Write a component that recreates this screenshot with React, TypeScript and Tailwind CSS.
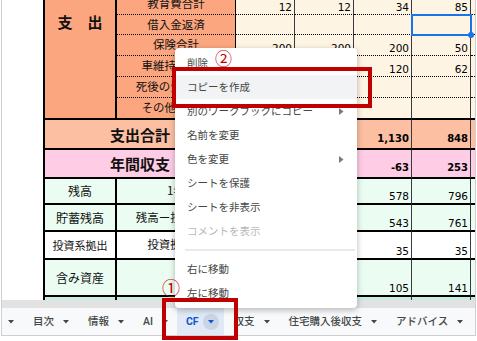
import React from "react";

const cols = "grid grid-cols-[74px_119px_59px_59px_58px_59px_4px]";
const jp = "font-['Noto_Sans_CJK_JP',sans-serif]";
const num = "font-['DejaVu_Sans',sans-serif]";

const topRows = [
  { label: "教育費合計", vals: ["12", "12", "34", "85"] },
  { label: "借入金返済", vals: ["", "", "", ""] },
  { label: "保険合計", vals: ["200", "200", "200", "50"] },
  { label: "車維持費合計", vals: ["120", "120", "120", "62"] },
  { label: "死後の費用合計", vals: ["", "", "", ""] },
  { label: "その他の合計", vals: ["", "", "", ""] },
];

const Caret = ({ className = "", color = "#444746" }: { className?: string; color?: string }) => (
  <svg width="6" height="4" viewBox="0 0 6 4" className={className}>
    <polygon points="0,0 6,0 3,3.5" fill={color} />
  </svg>
);

const SubArrow = () => (
  <svg width="5" height="7" viewBox="0 0 5 7" className="ml-auto mr-[13px]">
    <polygon points="0,0 4.5,3.5 0,7" fill="#7a7a7a" />
  </svg>
);

const DataCell = ({ v, bg, last, bold }: { v: string; bg: string; last?: boolean; bold?: boolean }) => (
  <div
    className={`${bg} ${num} flex items-end justify-end pr-[2px] ${bold ? "pb-[4px] font-bold text-[10px]" : "pb-[2px] text-[10.5px]"} leading-none text-black border-r border-r-[#3a3a3a] ${
      last ? "border-b-2 border-b-black" : "border-b border-b-black [border-bottom-style:dotted]"
    }`}
  >
    {v}
  </div>
);

type SumRow = {
  h: string;
  bg: string;
  merged?: string;
  c1?: string;
  c1size?: string;
  c2?: string;
  vals: string[];
  bold?: boolean;
};

const sumRows: SumRow[] = [
  { h: "h-[30px]", bg: "bg-[#fcbfa2]", merged: "支出合計", vals: ["1,050", "1,080", "1,130", "848"], bold: true },
  { h: "h-[29px]", bg: "bg-[#ffcce5]", merged: "年間収支", vals: ["12", "-20", "-63", "253"], bold: true },
  { h: "h-[26px]", bg: "bg-[#ebfdf2]", c1: "残高", c2: "1年", vals: ["420", "520", "578", "796"] },
  { h: "h-[27px]", bg: "bg-[#ebfdf2]", c1: "貯蓄残高", c2: "残高ー投資累計", vals: ["400", "490", "543", "761"] },
  { h: "h-[28px]", bg: "bg-white", c1: "投資系拠出", c1size: "text-[11px]", c2: "投資拠出額", vals: ["35", "35", "35", "35"] },
  { h: "h-[37px]", bg: "bg-[#ebfdf2]", c1: "含み資産", c2: "", vals: ["40", "72", "105", "141"] },
];

const menuItems = [
  { t: "削除" },
  { t: "コピーを作成", hl: true },
  { t: "別のワークブックにコピー", sub: true },
  { t: "名前を変更" },
  { t: "色を変更", sub: true },
  { t: "シートを保護" },
  { t: "シートを非表示" },
  { t: "コメントを表示", dis: true },
];

const Tab = ({ name }: { name: string }) => (
  <div className="flex items-center h-full pl-[10px] pr-[9px]">
    <span>{name}</span>
    <Caret className="ml-[9px]" />
  </div>
);

export default function App() {
  return (
    <div className={`w-[477px] h-[341px] bg-white relative overflow-hidden ${jp}`}>
      <div className="ml-[1px] w-[475px] h-[336px] border-x border-b border-[#cfcfcf] flex flex-col overflow-hidden">
        {/* sheet */}
        <div className="h-[300px] flex overflow-hidden">
          <div className="w-[41px] shrink-0 bg-white" />
          <div className="w-[432px] shrink-0 -mt-[6px] text-[#111]">
            <div className={`${cols} grid-rows-[21px_20px_21px_21px_21px_22px]`}>
              <div className="row-span-6 bg-[#fba67f] border-l-2 border-r-2 border-b-2 border-black flex justify-center pt-[20px]">
                <span className="text-[15px] leading-[16px] font-bold">支　出</span>
              </div>
              {topRows.map((r, i) => {
                const last = i === topRows.length - 1;
                return (
                  <React.Fragment key={r.label}>
                    <div
                      className={`bg-[#fba67f] flex items-center justify-center text-[11.5px] leading-none border-r border-r-black ${
                        last ? "border-b-2 border-b-black" : "border-b border-b-black [border-bottom-style:dotted]"
                      }`}
                    >
                      {r.label}
                    </div>
                    {r.vals.map((v, j) => (
                      <DataCell key={j} v={v} bg="bg-[#fef4e4]" last={last} />
                    ))}
                    <div
                      className={`bg-[#fef4e4] ${
                        last ? "border-b-2 border-b-black" : "border-b border-b-black [border-bottom-style:dotted]"
                      }`}
                    />
                  </React.Fragment>
                );
              })}
            </div>

            {sumRows.map((r, i) => (
              <div key={i} className={`${cols} ${r.h}`}>
                {r.merged ? (
                  <div
                    className={`col-span-2 ${r.bg} border-l-2 border-r border-black border-b-2 flex items-center justify-center text-[15px] font-bold leading-none`}
                  >
                    {r.merged}
                  </div>
                ) : (
                  <>
                    <div
                      className={`${r.bg} border-l-2 border-r-2 border-b-2 border-black flex items-center justify-center ${r.c1size ?? "text-[12px]"} leading-none`}
                    >
                      {r.c1}
                    </div>
                    <div className={`${r.bg} border-r border-b-2 border-black flex items-center justify-center text-[11.5px] leading-none`}>
                      {r.c2}
                    </div>
                  </>
                )}
                {r.vals.map((v, j) => (
                  <div
                    key={j}
                    className={`${r.bg} ${num} flex items-end justify-end pr-[2px] leading-none text-black border-r border-r-[#3a3a3a] border-b-2 border-b-black ${
                      r.bold ? "pb-[4px] font-bold text-[10px]" : "pb-[2px] text-[10.5px]"
                    }`}
                  >
                    {v}
                  </div>
                ))}
                <div className={`${r.bg} border-b-2 border-b-black`} />
              </div>
            ))}
            <div className={`${cols} h-[10px]`}>
              <div className="bg-[#c6ece2] border-l-2 border-r-2 border-black" />
              <div className="bg-[#c6ece2] border-r border-black" />
              <div className="bg-[#c6ece2] border-r border-[#3a3a3a]" />
              <div className="bg-[#c6ece2] border-r border-[#3a3a3a]" />
              <div className="bg-[#c6ece2] border-r border-[#3a3a3a]" />
              <div className="bg-[#c6ece2] border-r border-[#3a3a3a]" />
              <div className="bg-[#c6ece2]" />
            </div>
          </div>
        </div>

        {/* scrollbar */}
        <div className="h-[8px] bg-[#e2e2e2]" />

        {/* sheet tabs */}
        <div className="h-[27px] bg-[#f8f9fa] flex items-center text-[10.5px] text-[#444746] font-medium font-['Roboto','Noto_Sans_CJK_JP',sans-serif]">
          <div className="flex items-center h-full pl-[6px] pr-[9px]">
            <Caret />
          </div>
          <Tab name="目次" />
          <Tab name="情報" />
          <Tab name="AI" />
          <div className="flex items-center h-full bg-[#e1e9f7] pl-[9px] pr-[5px] text-[#0b57d0] font-bold">
            <span>CF</span>
            <div className="ml-[4px] w-[16px] h-[16px] rounded-full bg-[#c9d4e6] flex items-center justify-center">
              <Caret color="#0b57d0" />
            </div>
          </div>
          <Tab name="収支" />
          <Tab name="住宅購入後収支" />
          <Tab name="アドバイス" />
        </div>
      </div>

      {/* selected cell */}
      <div className="absolute left-[411px] top-[14px] w-[61px] h-[22px] border-2 border-[#1a73e8]" />
      <div className="absolute left-[468px] top-[32px] w-[6px] h-[6px] rounded-full bg-[#1a73e8]" />

      {/* context menu */}
      <div className="absolute left-[175px] top-[48px] w-[182px] h-[260px] bg-white rounded-[4px] shadow-[0_2px_6px_rgba(0,0,0,0.28)] pt-[3px] text-[10.5px] text-[#444746]">
        {menuItems.map((m) => (
          <div
            key={m.t}
            className={`h-[24px] flex items-center pl-[12px] ${m.hl ? "bg-[#f1f3f4]" : ""} ${m.dis ? "text-[#b8b8b8]" : ""}`}
          >
            <span>{m.t}</span>
            {m.sub && <SubArrow />}
          </div>
        ))}
        <div className="h-[2px] bg-[#e8eaed] ml-[10px] mr-[2px] my-[6px]" />
        <div className="h-[24px] flex items-center pl-[12px]">右に移動</div>
        <div className="h-[24px] flex items-center pl-[12px]">左に移動</div>
      </div>

      {/* annotations */}
      <div className="absolute left-[172px] top-[67px] w-[200px] h-[41px] border-[4px] border-[#c00000]" />
      <span className="absolute left-[215px] top-[49px] text-[17px] leading-none text-[#c00000]">②</span>
      <div className="absolute left-[162px] top-[298px] w-[76px] h-[42px] border-[4px] border-[#c00000]" />
      <span className="absolute left-[162px] top-[278px] text-[18px] leading-none text-[#c00000]">①</span>
    </div>
  );
}
